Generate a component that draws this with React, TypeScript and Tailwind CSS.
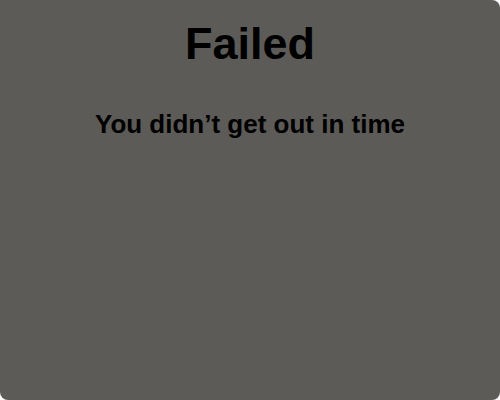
export default function App() {
  return (
    <div className="w-[500px] h-[400px] bg-[#5c5b57] rounded-lg rounded-tl-none flex flex-col items-center pt-[20px]" style={{ fontFamily: '"Liberation Sans", Arial, sans-serif' }}>
      <h1 className="text-[45px] leading-[48px] font-bold text-black">Failed</h1>
      <p className="mt-[41px] text-[26px] leading-[30px] font-bold text-black">You didn’t get out in time</p>
    </div>
  );
}
